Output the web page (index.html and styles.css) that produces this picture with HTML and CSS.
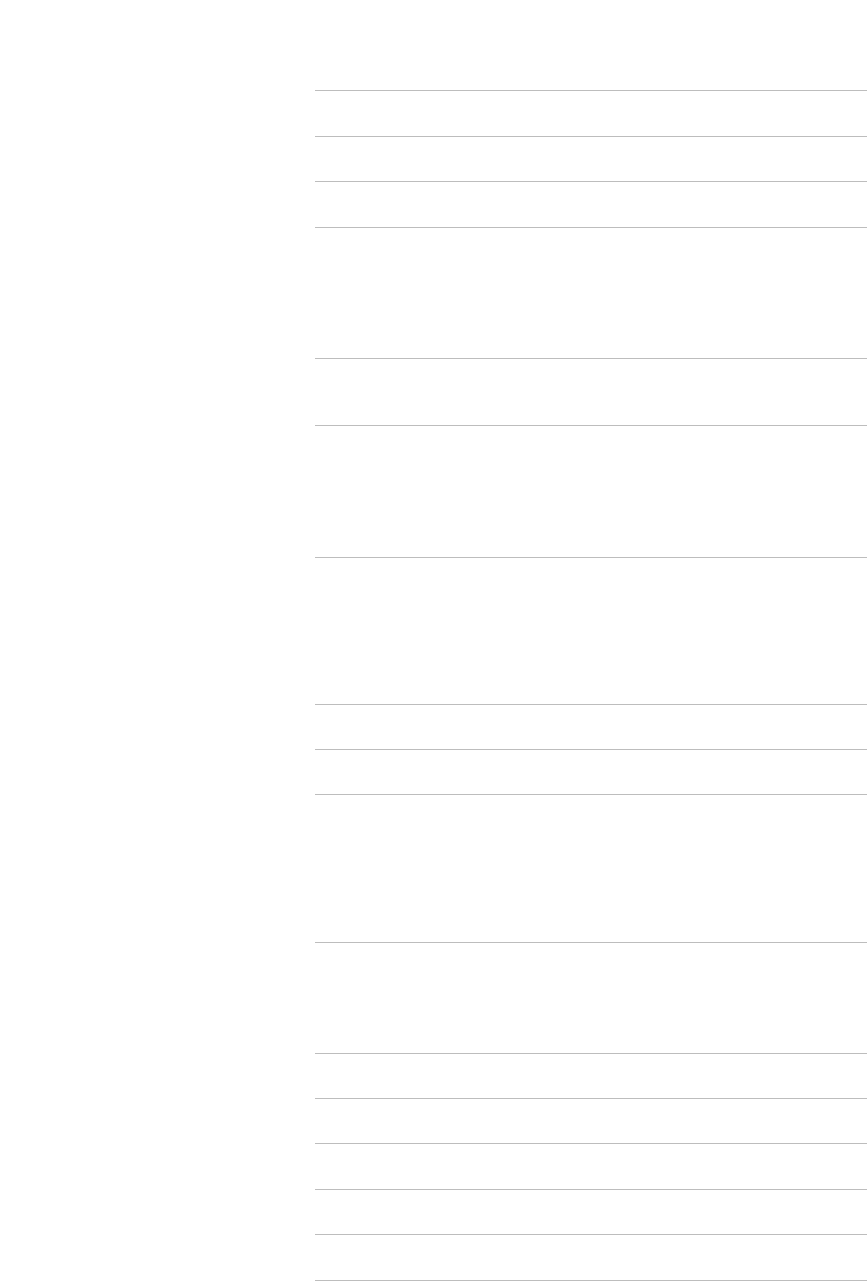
FILE: index.html
```html
<!DOCTYPE html>
<html lang="en">
<head>
    <meta charset="UTF-8">
    <meta name="viewport" content="width=device-width, initial-scale=1.0">
    <title>List</title>
    <link rel="stylesheet" href="styles.css">
</head>
<body>

<div class="page">
    <aside class="side"></aside>

    <div class="list">
        <div class="item h46"></div>
        <div class="item"></div>
        <div class="item h46"></div>
        <div class="item h131"></div>
        <div class="item h67"></div>
        <div class="item h132"></div>
        <div class="item h147"></div>
        <div class="item"></div>
        <div class="item"></div>
        <div class="item h148"></div>
        <div class="item h111"></div>
        <div class="item"></div>
        <div class="item"></div>
        <div class="item h46"></div>
        <div class="item"></div>
        <div class="item h46"></div>
        <div class="item"></div>
    </div>
</div>

</body>
</html>
```

FILE: styles.css
```css
body {
    margin: 0;
    background: #ffffff;
    font-family: 'Liberation Sans', Arial, sans-serif;
}
.page {
    display: flex;
    padding-top: 90px;
    padding-right: 1px;
}
.side {
    width: 315px;
    flex-shrink: 0;
}
.list {
    flex: 1;
}
.item {
    box-sizing: border-box;
    height: 45px;
    border-top: 1px solid #bdbdbd;
}
.h46 { height: 46px; }
.h67 { height: 67px; }
.h111 { height: 111px; }
.h131 { height: 131px; }
.h132 { height: 132px; }
.h147 { height: 147px; }
.h148 { height: 148px; }
```
